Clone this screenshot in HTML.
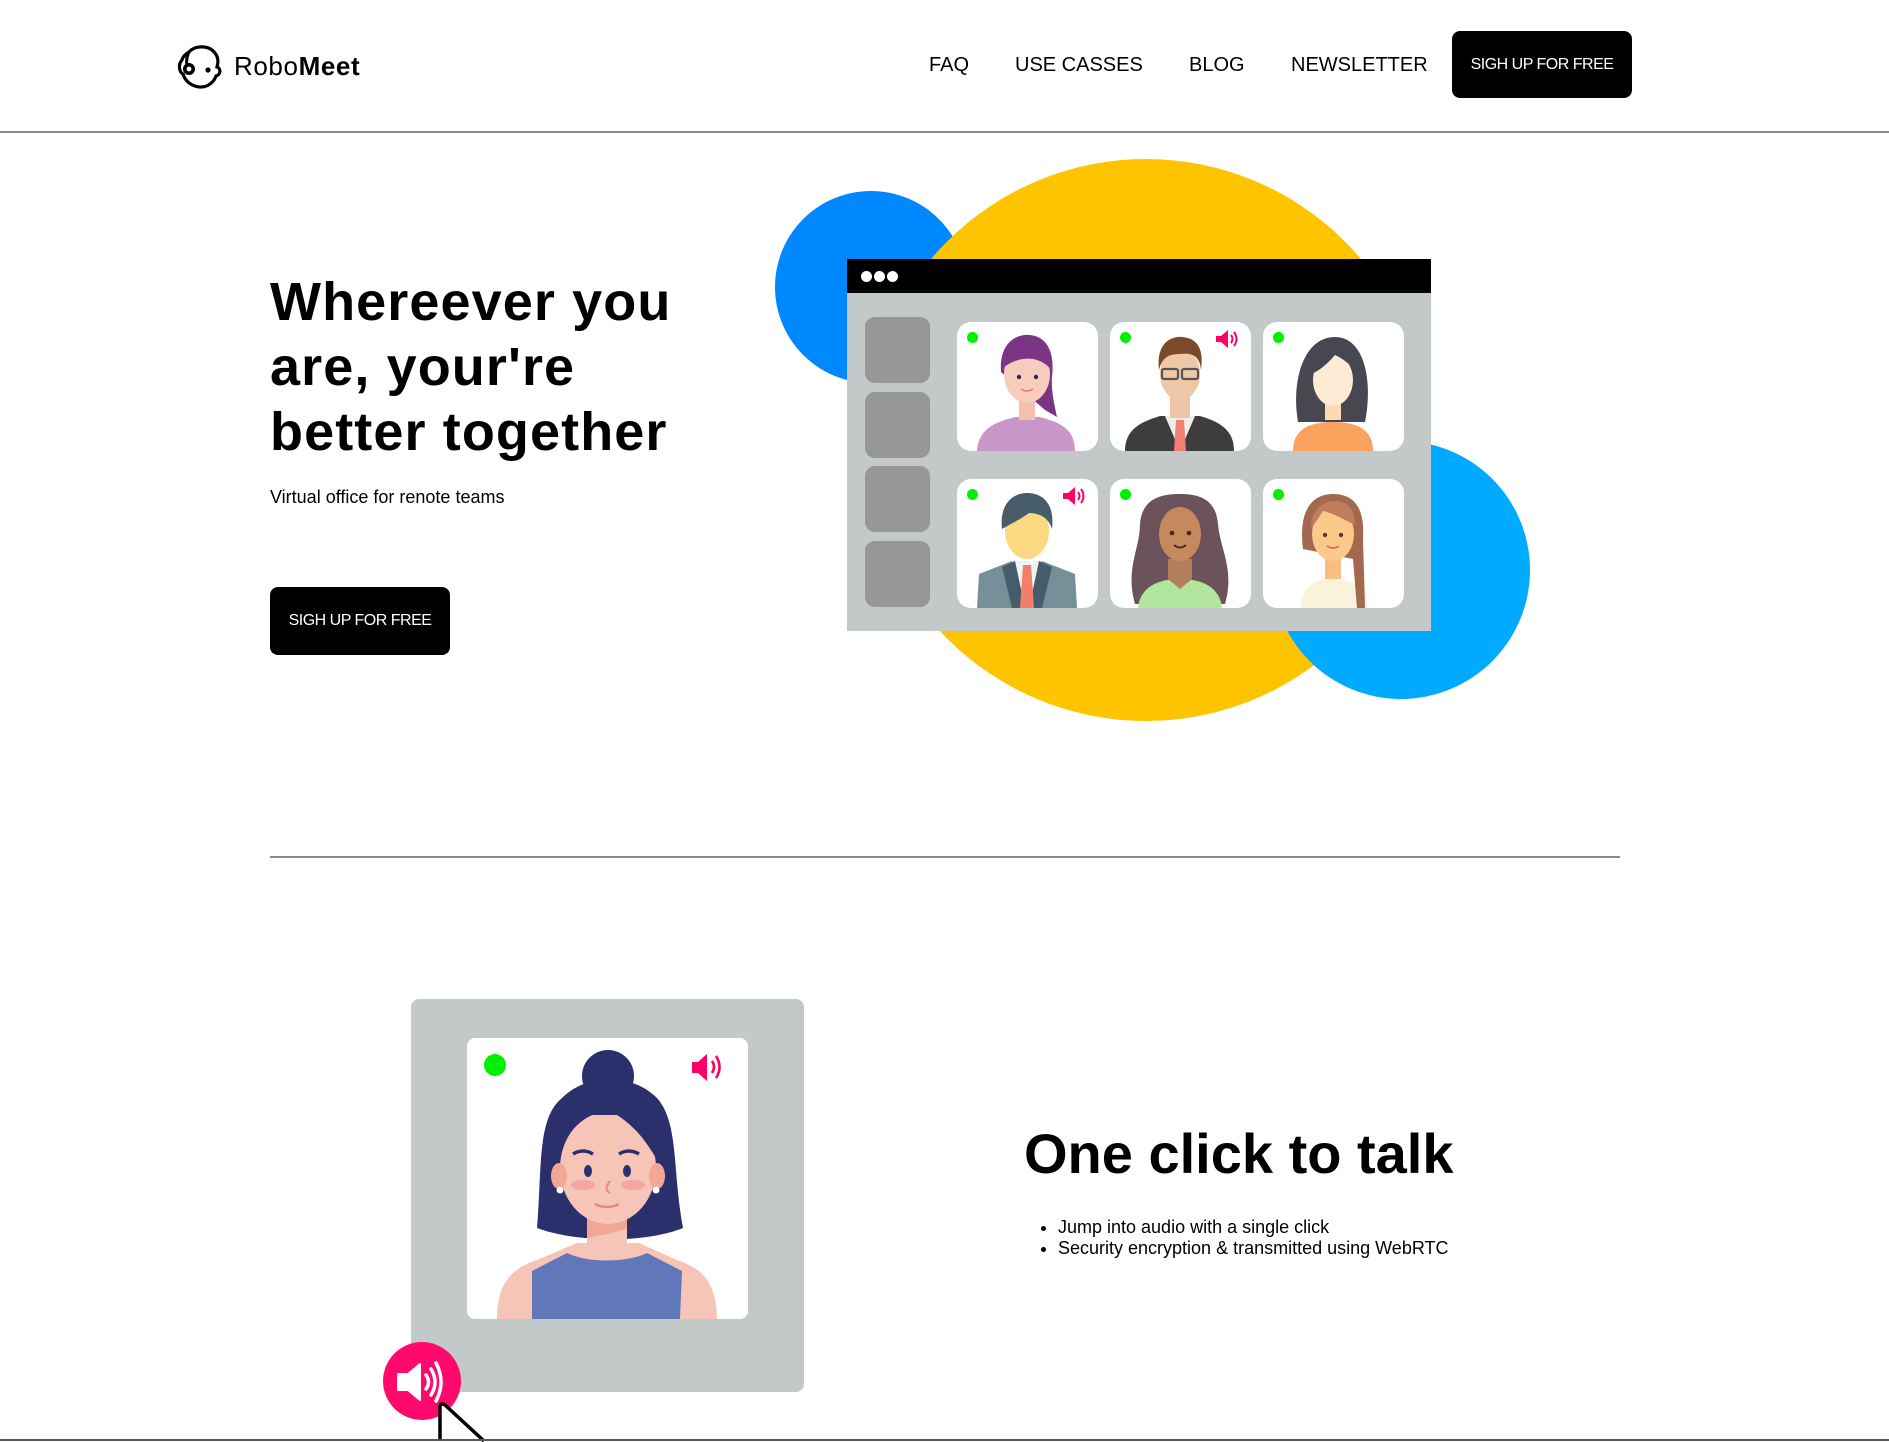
<!DOCTYPE html>
<html><head><meta charset="utf-8"><style>
*{margin:0;padding:0;box-sizing:border-box}
body{width:1889px;height:1441px;overflow:hidden;background:#fff;font-family:"Liberation Sans",Arial,sans-serif;position:relative;color:#000}
.a{position:absolute}
.nav{position:absolute;top:54px;font-size:20px;white-space:nowrap}
.btn{position:absolute;background:#000;color:#fff;border-radius:8px;display:flex;align-items:center;justify-content:center;font-size:16px;letter-spacing:-0.5px}
.side{position:absolute;left:18px;width:65px;height:66px;background:#979797;border-radius:10px}
.tile{position:absolute;width:141px;height:129px;background:#fff;border-radius:14px;overflow:hidden}
.tile svg{position:absolute;left:0;top:0}
.dot{position:absolute;left:10px;top:10px;width:11px;height:11px;border-radius:50%;background:#00f000}
</style></head><body>

<!-- header -->
<svg class="a" style="left:177px;top:44px" width="46" height="46" viewBox="0 0 46 46">
<path d="M12 8 C18 1 32 1 38 9 C42 14 41 20 40 23 C44 24 44 31 39 32 C37 38 31 43 24 43 C15 43 8 37 6 30 C2 28 1 20 5 16 C6 12 9 10 12 8 Z" fill="none" stroke="#000" stroke-width="3.2"/>
<path d="M12 8 C9 14 9 20 11 24" fill="none" stroke="#000" stroke-width="3"/>
<circle cx="12" cy="25" r="6" fill="#000"/><circle cx="12" cy="25" r="2.4" fill="#fff"/>
<circle cx="31" cy="26" r="2.6" fill="#000"/>
</svg>
<div class="a" style="left:234px;top:51px;font-size:26px;letter-spacing:0.6px">Robo<b>Meet</b></div>
<div class="nav" style="left:929px">FAQ</div>
<div class="nav" style="left:1015px">USE CASSES</div>
<div class="nav" style="left:1189px">BLOG</div>
<div class="nav" style="left:1291px">NEWSLETTER</div>
<div class="btn" style="left:1452px;top:31px;width:180px;height:67px">SIGH UP FOR FREE</div>
<div class="a" style="left:0;top:131px;width:1889px;height:2px;background:#8a8a8a"></div>

<!-- hero text -->
<div class="a" style="left:270px;top:270px;font-size:54px;font-weight:bold;line-height:65px;letter-spacing:1.1px">Whereever you<br>are, your're<br>better together</div>
<div class="a" style="left:270px;top:487px;font-size:18px">Virtual office for renote teams</div>
<div class="btn" style="left:270px;top:587px;width:180px;height:68px">SIGH UP FOR FREE</div>

<!-- hero graphic -->
<div class="a" style="left:775px;top:191px;width:192px;height:192px;border-radius:50%;background:#0088ff"></div>
<div class="a" style="left:865px;top:159px;width:562px;height:562px;border-radius:50%;background:#ffc400"></div>
<div class="a" style="left:1272px;top:441px;width:258px;height:258px;border-radius:50%;background:#00aaff"></div>
<div class="a" style="left:847px;top:259px;width:584px;height:372px;background:#c3c8c8">
 <div class="a" style="left:0;top:0;width:584px;height:34px;background:#000"></div>
 <div class="a" style="left:14px;top:12px;width:11px;height:11px;border-radius:50%;background:#fff"></div>
 <div class="a" style="left:27px;top:12px;width:11px;height:11px;border-radius:50%;background:#fff"></div>
 <div class="a" style="left:40px;top:12px;width:11px;height:11px;border-radius:50%;background:#fff"></div>
 <div class="side" style="top:58px"></div>
 <div class="side" style="top:133px"></div>
 <div class="side" style="top:207px"></div>
 <div class="side" style="top:282px"></div>

 <div class="tile" style="left:110px;top:63px"><svg width="141" height="129" viewBox="0 0 141 129">
  <path d="M44 50 C42 20 60 12 72 13 C90 14 98 30 95 55 C94 70 98 85 100 95 L88 88 Z" fill="#7a3684"/>
  <path d="M20 129 C22 105 40 100 58 95 L83 95 C100 100 118 105 118 129 Z" fill="#c996c8"/>
  <rect x="62" y="76" width="16" height="22" fill="#f5bfb0"/>
  <ellipse cx="70" cy="52" rx="23" ry="29" fill="#f8cbbf"/>
  <path d="M47 45 C48 25 62 20 75 22 C88 24 94 35 94 48 C85 35 65 32 47 45Z" fill="#7a3684"/>
  <circle cx="62" cy="55" r="2.2" fill="#2a2a55"/><circle cx="79" cy="55" r="2.2" fill="#2a2a55"/>
  <path d="M64 67 Q70 71 76 67" stroke="#e07a6a" stroke-width="1.5" fill="none"/>
  </svg><div class="dot"></div></div>
 <div class="tile" style="left:263px;top:63px"><svg width="141" height="129" viewBox="0 0 141 129">
  <path d="M15 129 C15 108 30 100 50 94 L90 94 C110 100 124 108 124 129 Z" fill="#3d3d3d"/>
  <path d="M55 94 L70 129 L85 94 Z" fill="#eee"/>
  <path d="M66 98 L74 98 L76 129 L64 129 Z" fill="#f37e72"/>
  <rect x="60" y="70" width="20" height="26" fill="#eec4a6"/>
  <ellipse cx="70" cy="52" rx="20" ry="26" fill="#f0c8a8"/>
  <path d="M49 48 C46 22 60 14 72 15 C88 16 94 28 91 48 C90 36 84 30 70 32 C58 32 52 36 49 48Z" fill="#7b4a2a"/>
  <rect x="52" y="47" width="16" height="10" rx="2" fill="none" stroke="#555" stroke-width="2.2"/>
  <rect x="72" y="47" width="16" height="10" rx="2" fill="none" stroke="#555" stroke-width="2.2"/>
  <g transform="translate(106,8)"><path d="M0 6 L5 6 L12 0 L12 18 L5 12 L0 12Z" fill="#ff0066"/><path d="M15 5 Q18 9 15 13 M18 2 Q23 9 18 16" stroke="#ff0066" stroke-width="2" fill="none"/></g>
  </svg><div class="dot"></div></div>
 <div class="tile" style="left:416px;top:63px"><svg width="141" height="129" viewBox="0 0 141 129">
  <path d="M35 100 C28 60 40 15 72 15 C102 15 110 60 102 100 Z" fill="#474751"/>
  <path d="M30 129 C30 108 45 100 70 100 C95 100 110 108 110 129Z" fill="#fba35e"/>
  <rect x="62" y="70" width="16" height="28" fill="#fdd9b5"/>
  <ellipse cx="70" cy="58" rx="20" ry="26" fill="#fdebd6"/>
  <path d="M48 52 C48 28 60 22 72 22 C85 22 94 30 94 50 C85 40 78 36 72 33 C66 40 58 48 48 52Z" fill="#474751"/>
  </svg><div class="dot"></div></div>
 <div class="tile" style="left:110px;top:220px"><svg width="141" height="129" viewBox="0 0 141 129">
  <path d="M20 129 L22 95 L55 82 L85 82 L118 95 L120 129Z" fill="#768f99"/>
  <path d="M55 82 L70 129 L85 82Z" fill="#eef2f4"/>
  <path d="M45 88 L58 82 L68 129 L55 129Z M95 88 L82 82 L72 129 L85 129Z" fill="#475c6b"/>
  <path d="M66 86 L74 86 L77 129 L63 129Z" fill="#f37e6b"/>
  <ellipse cx="70" cy="52" rx="22" ry="28" fill="#fbd882"/>
  <path d="M45 50 C42 25 56 14 70 14 C86 14 98 25 95 50 C92 40 84 34 72 34 C64 40 55 44 45 50Z" fill="#475c6b"/>
  <g transform="translate(106,8)"><path d="M0 6 L5 6 L12 0 L12 18 L5 12 L0 12Z" fill="#ff0066"/><path d="M15 5 Q18 9 15 13 M18 2 Q23 9 18 16" stroke="#ff0066" stroke-width="2" fill="none"/></g>
  </svg><div class="dot"></div></div>
 <div class="tile" style="left:263px;top:220px"><svg width="141" height="129" viewBox="0 0 141 129">
  <path d="M25 125 C15 90 30 70 30 45 C32 20 50 15 70 15 C92 15 106 22 108 45 C110 70 125 90 115 125Z" fill="#6b525b"/>
  <path d="M28 129 C30 108 48 100 70 100 C92 100 110 108 112 129Z" fill="#b1e59e"/>
  <path d="M58 80 L82 80 L82 100 L70 110 L58 100Z" fill="#b27e5b"/>
  <ellipse cx="70" cy="55" rx="21" ry="27" fill="#c6895e"/>
  <circle cx="62" cy="54" r="2.3" fill="#3d2a25"/><circle cx="79" cy="54" r="2.3" fill="#3d2a25"/>
  <path d="M64 66 Q70 71 76 66" stroke="#3d2a25" stroke-width="1.8" fill="none"/>
  </svg><div class="dot"></div></div>
 <div class="tile" style="left:416px;top:220px"><svg width="141" height="129" viewBox="0 0 141 129">
  <path d="M38 129 C38 108 52 100 70 100 C90 100 105 108 105 129Z" fill="#fbf2dc"/>
  <path d="M40 70 C35 30 50 15 70 15 C92 15 102 30 100 60 L102 129 L94 129 L90 80Z" fill="#a4684e"/>
  <rect x="62" y="76" width="16" height="24" fill="#f7bf80"/>
  <ellipse cx="70" cy="55" rx="21" ry="27" fill="#fbca8a"/>
  <path d="M48 50 C48 30 60 22 72 22 C84 22 92 30 92 46 C80 40 70 34 60 32 C56 38 52 44 48 50Z" fill="#bf7d5e"/>
  <circle cx="62" cy="56" r="2.2" fill="#5a3a2a"/><circle cx="78" cy="56" r="2.2" fill="#5a3a2a"/>
  <path d="M64 67 Q70 71 76 67" stroke="#d07050" stroke-width="1.6" fill="none"/>
  </svg><div class="dot"></div></div>
</div>

<div class="a" style="left:270px;top:856px;width:1350px;height:2px;background:#8a8a8a"></div>

<div class="a" style="left:411px;top:999px;width:393px;height:393px;background:#c3c8c8;border-radius:8px"></div>
<div class="a" style="left:467px;top:1038px;width:281px;height:281px;background:#fff;border-radius:8px;overflow:hidden">
 <svg width="281" height="281" viewBox="0 0 281 281">
  <circle cx="141" cy="38" r="26" fill="#2b2f6c"/>
  <path d="M70 190 C75 130 70 80 95 60 C120 35 165 35 190 60 C212 85 205 130 216 190 C180 205 110 205 70 190Z" fill="#2b2f6c"/>
  <path d="M30 281 C30 245 45 230 70 222 L110 205 L172 205 L210 222 C235 230 250 245 250 281Z" fill="#f7c5b8"/>
  <path d="M65 281 L65 233 L100 215 C120 225 160 225 180 215 L215 233 L213 281Z" fill="#6078b9"/>
  <path d="M120 175 L160 175 L160 210 C150 220 130 220 120 210Z" fill="#f7c5b8"/>
  <path d="M120 175 L160 175 L160 190 C150 195 130 198 120 200Z" fill="#f2a796"/>
  <ellipse cx="141" cy="130" rx="48" ry="56" fill="#f7c5b8"/>
  <path d="M91 125 C92 100 98 85 102 77 L150 77 C170 90 180 105 192 125 C190 90 175 70 141 68 C110 68 92 85 91 125Z" fill="#2b2f6c"/>
  <ellipse cx="92" cy="138" rx="8" ry="13" fill="#f2a796"/><ellipse cx="190" cy="138" rx="8" ry="13" fill="#f2a796"/>
  <circle cx="93" cy="152" r="3.5" fill="#fff"/><circle cx="189" cy="152" r="3.5" fill="#fff"/>
  <path d="M106 116 Q116 110 126 116 M152 116 Q162 110 172 116" stroke="#2b2f6c" stroke-width="3.5" fill="none"/>
  <ellipse cx="121" cy="133" rx="4" ry="6" fill="#2b2f6c"/><ellipse cx="160" cy="133" rx="4" ry="6" fill="#2b2f6c"/>
  <ellipse cx="116" cy="147" rx="12" ry="5" fill="#f2a7a0"/><ellipse cx="166" cy="147" rx="12" ry="5" fill="#f2a7a0"/>
  <path d="M143 143 Q136 152 143 155" stroke="#e88a7a" stroke-width="2" fill="none"/>
  <path d="M128 166 Q140 172 152 166" stroke="#e88a7a" stroke-width="2.5" fill="none"/>
  <circle cx="28" cy="27" r="11" fill="#00f000"/>
  <g transform="translate(225,15)"><path d="M0 9 L6 9 L15 1 L15 28 L6 20 L0 20Z" fill="#ff0066"/><path d="M20 8 Q24 14 20 20 M24 3 Q31 14 24 25" stroke="#ff0066" stroke-width="2.6" fill="none"/></g>
 </svg>
</div>
<div class="a" style="left:383px;top:1342px;width:78px;height:78px;border-radius:50%;background:#ff0a6c"></div>
<svg class="a" style="left:383px;top:1342px" width="110" height="100" viewBox="0 0 110 100">
 <path d="M15 32 L25 32 L37 22 L37 58 L25 48 L15 48Z" fill="#fff" stroke="#fff" stroke-width="2" stroke-linejoin="round"/>
 <path d="M43 33 Q48 40 43 47 M48 27 Q56 40 48 53 M53 21 Q63 40 53 59" stroke="#fff" stroke-width="3.5" fill="none" stroke-linecap="round"/>
 <path d="M57 99 L57 65 Q57 60 62 63 L101 99" fill="#fff" stroke="#000" stroke-width="3.5"/>
</svg>
<div class="a" style="left:1024px;top:1121px;font-size:56px;font-weight:bold;letter-spacing:0px">One click to talk</div>
<ul class="a" style="left:1058px;top:1217px;font-size:18px;line-height:21px">
 <li>Jump into audio with a single click</li>
 <li>Security encryption &amp; transmitted using WebRTC</li>
</ul>
<div class="a" style="left:0;top:1439px;width:1889px;height:2px;background:#555"></div>
</body></html>
